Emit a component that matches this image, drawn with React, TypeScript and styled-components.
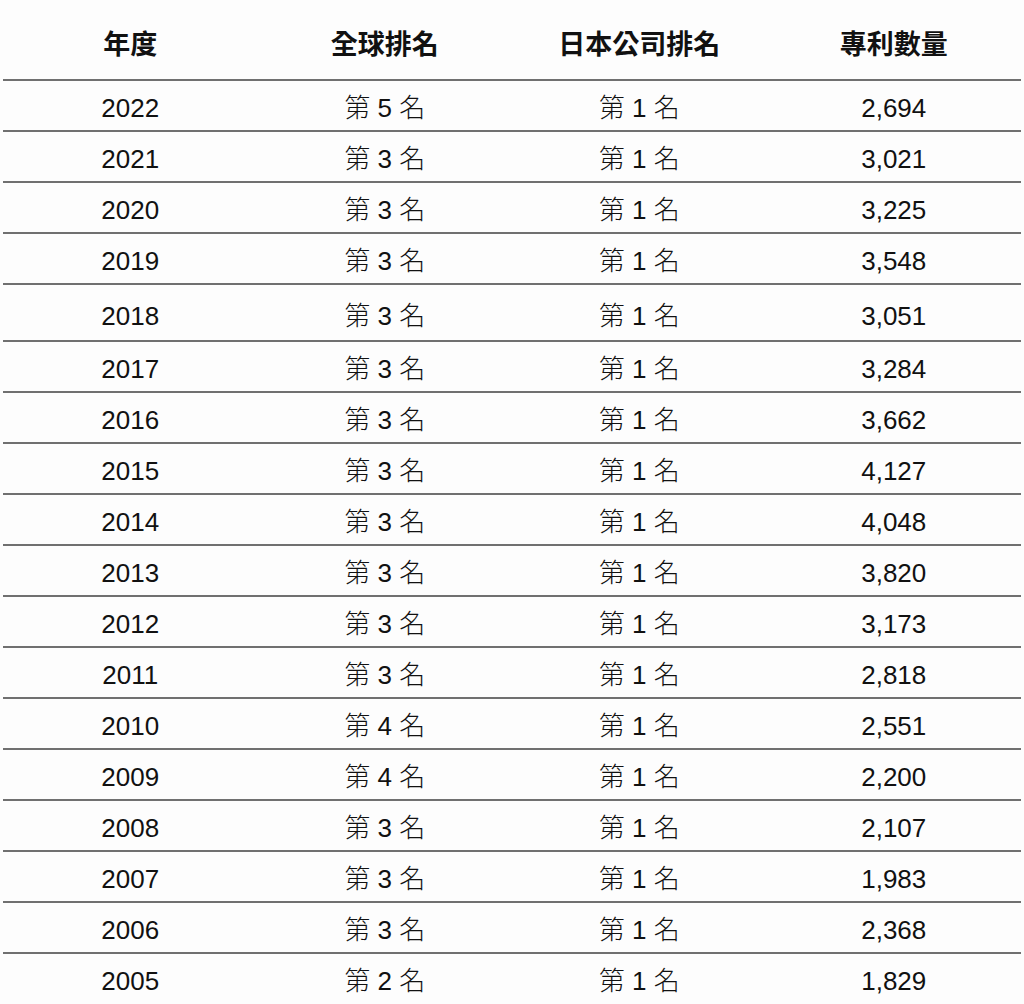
import React from "react";
import styled, { createGlobalStyle } from "styled-components";

const Global = createGlobalStyle`
  html, body { margin: 0; padding: 0; background: #fdfdfd; }
  body { font-family: "Liberation Sans", Arial, "Noto Sans CJK TC", sans-serif; color: #111; }
`;

const Table = styled.div`
  width: 1018px;
  margin: 0 3px;
  display: flex;
  flex-direction: column;
`;

const HeaderRow = styled.div`
  display: grid;
  grid-template-columns: repeat(4, 1fr);
  height: 79px;
  box-sizing: border-box;
  padding-top: 10px;
  align-items: center;
`;

const Row = styled.div<{ $tall?: boolean }>`
  display: grid;
  grid-template-columns: repeat(4, 1fr);
  height: ${(p) => (p.$tall ? 57 : 51)}px;
  box-sizing: border-box;
  border-top: 2px solid #707070;
  padding-top: ${(p) => (p.$tall ? 6 : 5)}px;
  align-items: center;
`;

const HeadCell = styled.div`
  text-align: center;
  font-family: "Liberation Sans", "Noto Sans CJK TC", sans-serif;
  font-weight: 700;
  font-size: 27px;
  line-height: 30px;
  color: #111;
`;

const Cell = styled.div`
  text-align: center;
  font-size: 26px;
  font-weight: 300;
  line-height: 30px;
  color: #111;
`;

const data: [string, number, number, string][] = [
  ["2022", 5, 1, "2,694"],
  ["2021", 3, 1, "3,021"],
  ["2020", 3, 1, "3,225"],
  ["2019", 3, 1, "3,548"],
  ["2018", 3, 1, "3,051"],
  ["2017", 3, 1, "3,284"],
  ["2016", 3, 1, "3,662"],
  ["2015", 3, 1, "4,127"],
  ["2014", 3, 1, "4,048"],
  ["2013", 3, 1, "3,820"],
  ["2012", 3, 1, "3,173"],
  ["2011", 3, 1, "2,818"],
  ["2010", 4, 1, "2,551"],
  ["2009", 4, 1, "2,200"],
  ["2008", 3, 1, "2,107"],
  ["2007", 3, 1, "1,983"],
  ["2006", 3, 1, "2,368"],
  ["2005", 2, 1, "1,829"],
];

export default function App() {
  return (
    <>
      <Global />
      <Table>
        <HeaderRow>
          <HeadCell>年度</HeadCell>
          <HeadCell>全球排名</HeadCell>
          <HeadCell>日本公司排名</HeadCell>
          <HeadCell>專利數量</HeadCell>
        </HeaderRow>
        {data.map(([year, g, j, n]) => (
          <Row key={year} $tall={year === "2018"}>
            <Cell>{year}</Cell>
            <Cell>第 {g} 名</Cell>
            <Cell>第 {j} 名</Cell>
            <Cell>{n}</Cell>
          </Row>
        ))}
      </Table>
    </>
  );
}
